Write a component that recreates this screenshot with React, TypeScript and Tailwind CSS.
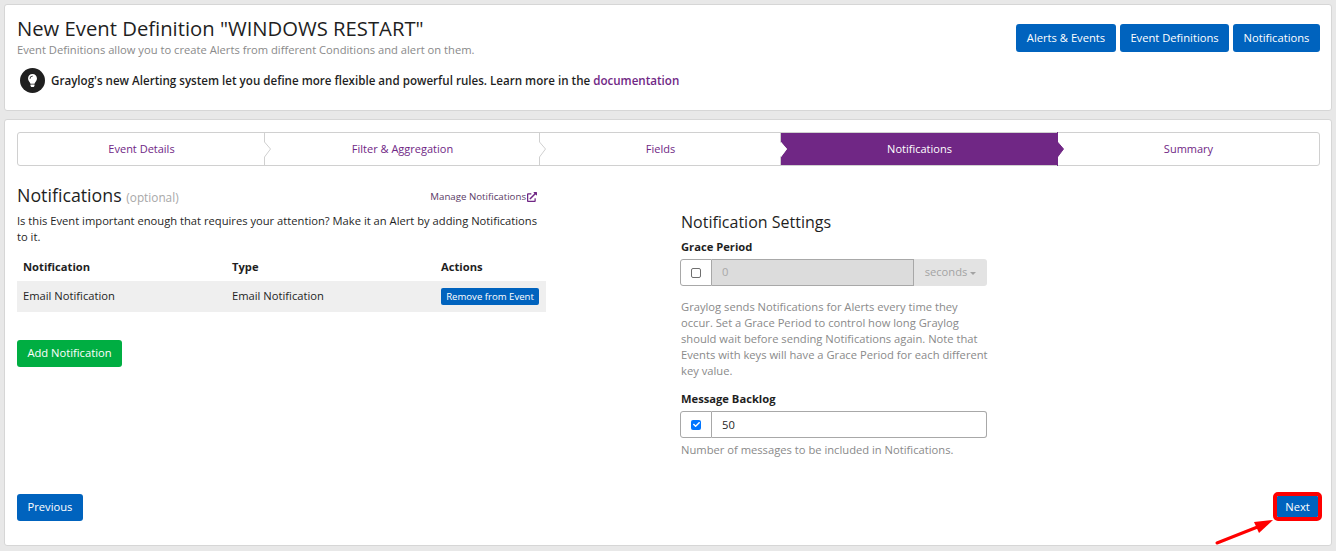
import { FaCheck, FaExternalLinkAlt, FaLightbulb } from "react-icons/fa";

const purple = "text-[#702785]";

const steps = [
  { label: "Event Details", width: "w-[247px]" },
  { label: "Filter & Aggregation", width: "w-[275px]" },
  { label: "Fields", width: "w-[241px]" },
  { label: "Notifications", width: "w-[277px]", active: true },
  { label: "Summary", width: "flex-1" },
];

const BlueButton = ({ children, className = "" }: { children: React.ReactNode; className?: string }) => (
  <button className={`h-[28px] rounded-[3px] bg-[#0063be] text-[11.2px] text-white ${className}`}>
    {children}
  </button>
);

const Stepper = () => (
  <div className="flex h-[34px] rounded-[3px] border border-[#d0d0d0] text-[11px]">
    {steps.map((step, i) => (
      <div
        key={step.label}
        className={`relative flex items-center justify-center pt-[1px] ${step.width} ${
          step.active ? "bg-[#702785] text-white" : purple
        }`}
      >
        {step.label}
        {i < steps.length - 1 && (
          <svg className="absolute left-full top-[-1px] z-10 ml-[-1px]" width="8" height="34">
            <path
              d="M0.5 0V10L6.5 17L0.5 25V34"
              fill={step.active ? "#702785" : "#fff"}
              stroke={step.active ? "#702785" : "#d0d0d0"}
            />
          </svg>
        )}
        {step.active && (
          <svg className="absolute left-0 top-[-1px] z-10" width="8" height="34">
            <path d="M0 10L6 17L0 25Z" fill="#fff" />
          </svg>
        )}
      </div>
    ))}
  </div>
);

const NotificationsTable = () => (
  <div className="mt-[8px] text-[11.2px]">
    <div className="grid h-[28px] grid-cols-[209px_209px_1fr] items-center px-[6px] pt-[1px] font-bold text-[#1f1f1f]">
      <span>Notification</span>
      <span>Type</span>
      <span>Actions</span>
    </div>
    <div className="grid h-[31px] grid-cols-[209px_209px_1fr] items-center bg-[#efefef] px-[6px] text-[#1f1f1f]">
      <span>Email Notification</span>
      <span>Email Notification</span>
      <span className="flex">
        <button className="h-[17px] w-[98px] rounded-[2px] bg-[#0063be] text-[9.6px] leading-[17px] text-white">
          Remove from Event
        </button>
      </span>
    </div>
  </div>
);

const SettingsColumn = () => (
  <div className="ml-[134px] w-[307px] pt-[45px] text-[11.2px]">
    <h3 className="pl-[1px] text-[16px] leading-[22px] text-[#1f1f1f]">Notification Settings</h3>
    <label className="mt-[6px] block pl-[1px] font-bold leading-[16px] text-[#1f1f1f]">Grace Period</label>
    <div className="mt-[4px] flex h-[27px]">
      <div className="flex w-[32px] items-center justify-center rounded-l-[3px] border border-[#a8a8a8] bg-white">
        <span className="h-[10px] w-[10px] rounded-[2px] border border-[#6f6f6f] bg-white" />
      </div>
      <div className="flex flex-1 items-center border-y border-r border-[#a8a8a8] bg-[#dcdcdc] pl-[10px] text-[#a8a8a8]">
        0
      </div>
      <div className="flex w-[73px] items-center justify-center gap-[3px] rounded-r-[3px] bg-[#e3e3e3] text-[#a3a3a3]">
        seconds
        <span className="mt-[1px] border-x-[3px] border-t-[3px] border-x-transparent border-t-[#a3a3a3]" />
      </div>
    </div>
    <p className="mr-[-2px] mt-[13px] pl-[1px] leading-[16px] text-[#8a8a8a]">
      Graylog sends Notifications for Alerts every time they occur. Set a Grace Period to control how long Graylog
      should wait before sending Notifications again. Note that Events with keys will have a Grace Period for each
      different key value.
    </p>
    <label className="mt-[12px] block pl-[1px] font-bold leading-[16px] text-[#1f1f1f]">Message Backlog</label>
    <div className="mt-[4px] flex h-[27px]">
      <div className="flex w-[32px] items-center justify-center rounded-l-[3px] border border-[#a8a8a8] bg-white">
        <span className="flex h-[10px] w-[10px] items-center justify-center rounded-[2px] bg-[#0075ff] text-white">
          <FaCheck size={7} />
        </span>
      </div>
      <div className="flex flex-1 items-center rounded-r-[3px] border-y border-r border-[#a8a8a8] bg-white pl-[10px] pt-[1px] text-[#1f1f1f]">
        50
      </div>
    </div>
    <p className="mt-[4px] pl-[1px] leading-[16px] text-[#8a8a8a]">Number of messages to be included in Notifications.</p>
  </div>
);

export default function App() {
  return (
    <div className="relative h-[551px] overflow-hidden bg-[#e8e8e8] px-[4px] pt-[4px] font-['Open_Sans',sans-serif]">
      <section className="flex h-[107px] justify-between rounded-[3px] border border-[#d6d6d6] bg-white pl-[12px] pr-[11px] pt-[9px]">
        <div>
          <h1 className="text-[20.25px] leading-[28px] text-[#1f1f1f]">New Event Definition "WINDOWS RESTART"</h1>
          <p className="text-[11.2px] leading-[16px] text-[#8a8a8a]">
            Event Definitions allow you to create Alerts from different Conditions and alert on them.
          </p>
          <div className="mt-[10px] flex items-center gap-[6px] pl-[3px] text-[11.6px] font-semibold text-[#1f1f1f]">
            <span className="flex h-[25px] w-[25px] items-center justify-center rounded-full bg-[#1f1f1f] text-white">
              <FaLightbulb size={13} />
            </span>
            <span>
              Graylog's new Alerting system let you define more flexible and powerful rules. Learn more in the{" "}
              <a className={purple}>documentation</a>
            </span>
          </div>
        </div>
        <div className="flex gap-[4px] pt-[10px]">
          <BlueButton className="w-[100px]">Alerts &amp; Events</BlueButton>
          <BlueButton className="w-[109px]">Event Definitions</BlueButton>
          <BlueButton className="w-[87px]">Notifications</BlueButton>
        </div>
      </section>

      <section className="mt-[8px] h-[427px] rounded-[3px] border border-[#d6d6d6] bg-white pl-[12px] pr-[11px] pt-[12px]">
        <Stepper />
        <div className="flex">
          <div className="w-[529px] pt-[16px]">
            <div className="flex items-center justify-between pr-[9px]">
              <h2 className="text-[17.8px] leading-[26px] text-[#1f1f1f]">
                Notifications <small className="text-[11.8px] text-[#a8a8a8]">(optional)</small>
              </h2>
              <a className="flex items-center gap-[1px] pt-[3px] text-[9.7px] text-[#5a3a66]">
                Manage Notifications <FaExternalLinkAlt size={10} className={purple} />
              </a>
            </div>
            <p className="mt-[3px] text-[11.2px] leading-[16px] text-[#1f1f1f]">
              Is this Event important enough that requires your attention? Make it an Alert by adding Notifications to
              it.
            </p>
            <NotificationsTable />
            <button className="mt-[28px] h-[27px] w-[105px] rounded-[3px] bg-[#00ae42] text-[11.2px] text-white">
              Add Notification
            </button>
          </div>
          <SettingsColumn />
        </div>
      </section>

      {/* footer buttons sit on the bottom of the panel */}
      <BlueButton className="absolute bottom-[30px] left-[17px] !h-[27px] w-[66px]">Previous</BlueButton>
      <BlueButton className="absolute bottom-[34px] right-[18px] !h-[21px] w-[41px] !rounded-[1px] pt-[1px] outline-[4px] outline-[#ff0000]">
        Next
      </BlueButton>

      {/* annotation arrow */}
      <svg className="absolute left-[1210px] top-[515px]" width="70" height="36">
        <path d="M7 28L50 11" stroke="#ff0000" strokeWidth="3" strokeLinecap="round" />
        <path d="M63 5L44 7L49 18Z" fill="#ff0000" />
      </svg>
    </div>
  );
}
